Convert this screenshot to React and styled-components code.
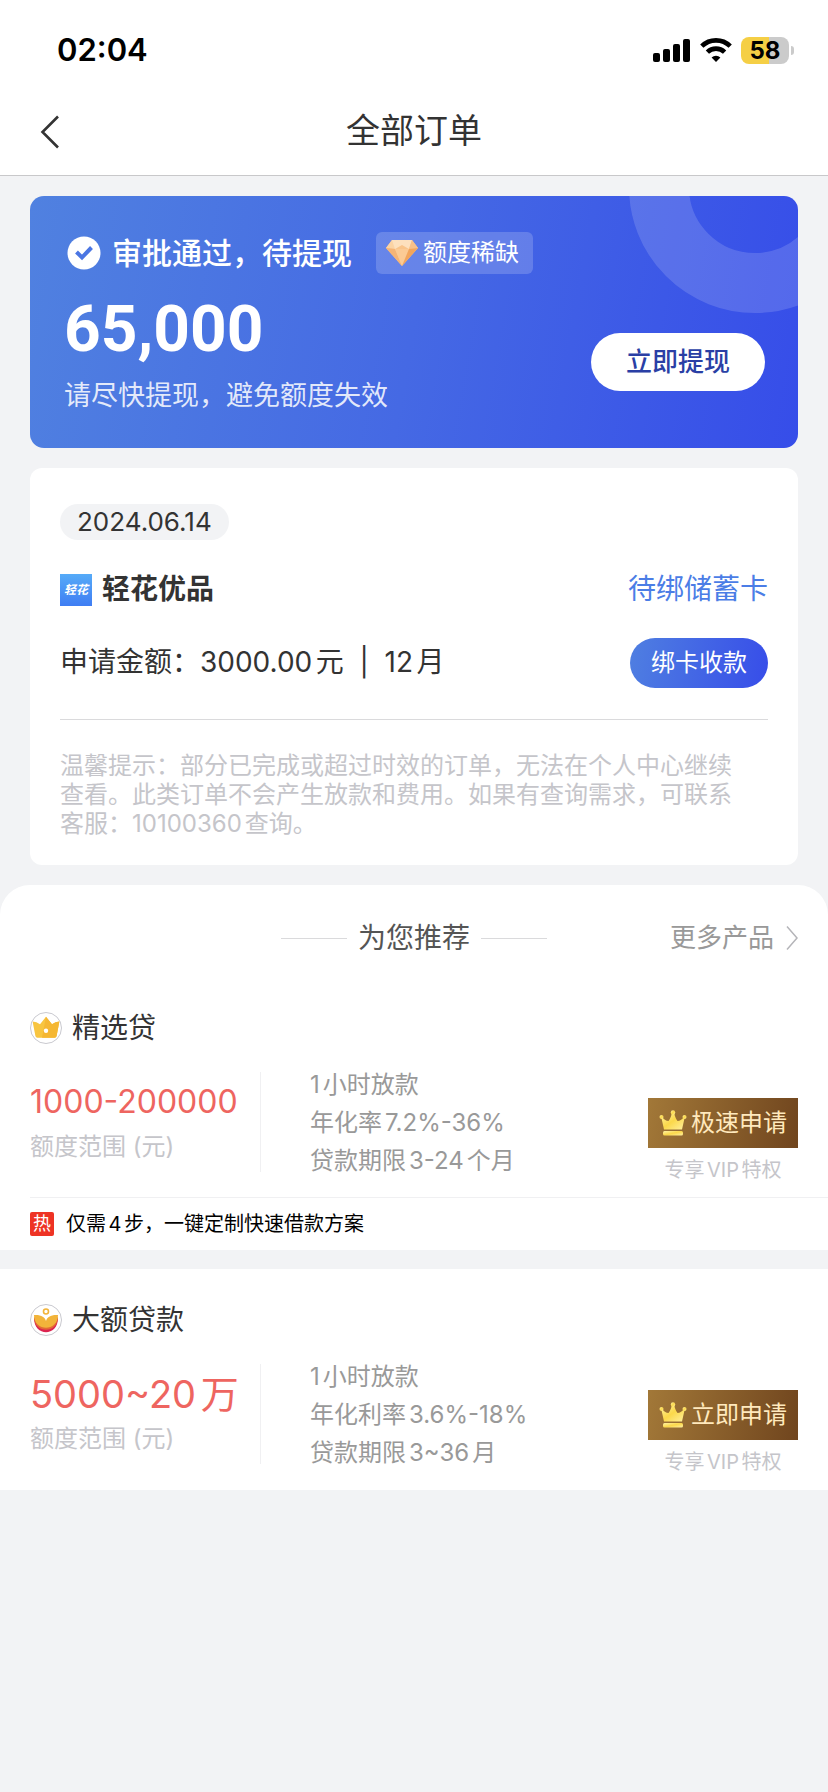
import styled, { createGlobalStyle } from "styled-components";

const Colors = {
  page: "#f2f3f5",
  dark: "#333333",
  grey: "#999999",
  light: "#c5c5ca",
  line: "#f0f0f2",
  red: "#ee6560",
  blue: "#4b7de6",
};

const products = [
  {
    id: 1,
    icon: "crown",
    name: "精选贷",
    amount: "1000-200000",
    details: ["1小时放款", "年化率7.2%-36%", "贷款期限3-24个月"],
    action: "极速申请",
    hot: "仅需4步，一键定制快速借款方案",
  },
  {
    id: 2,
    icon: "lotus",
    name: "大额贷款",
    amount: "5000~20万",
    large: true,
    details: ["1小时放款", "年化利率3.6%-18%", "贷款期限3~36月"],
    action: "立即申请",
  },
];

function SignalIcon() {
  return (
    <svg width="38" height="24" viewBox="0 0 38 24" aria-hidden="true">
      <rect x="0" y="15" width="7" height="9" rx="2" />
      <rect x="10" y="11" width="7" height="13" rx="2" />
      <rect x="20" y="6" width="7" height="18" rx="2" />
      <rect x="30" y="1" width="7" height="23" rx="2" />
    </svg>
  );
}

function WifiIcon() {
  return (
    <svg width="32" height="24" viewBox="0 0 32 24" aria-hidden="true">
      <g fill="none" stroke="#000" strokeWidth="4.6">
        <path d="M1.8 8.2a20.2 20.2 0 0 1 28.4 0" />
        <path d="M7.4 14.2a12.2 12.2 0 0 1 17.2 0" />
      </g>
      <path d="M16 24l-4.4-4.4a6.4 6.4 0 0 1 8.8 0z" />
    </svg>
  );
}

function CheckIcon() {
  return (
    <svg width="40" height="40" viewBox="0 0 40 40" aria-hidden="true">
      <circle cx="20" cy="20" r="16.5" fill="#fff" />
      <path d="M12.5 19l5.5 5.5 9.5-10" fill="none" stroke="#4b76e3" strokeWidth="4" />
    </svg>
  );
}

function DiamondIcon() {
  return (
    <svg width="34" height="28" viewBox="0 0 34 28" aria-hidden="true">
      <path d="M7 1h20l6 8-16 18L1 9z" fill="#f9c48a" />
      <path d="M7 1h10l-7 9-9-1z" fill="#fbd3a4" />
      <path d="M7 1h20l-3 9-7-4-7 4z" fill="#fde0bd" />
      <path d="M27 1l6 8-9 1z" fill="#f8c088" />
      <path d="M1 9l9 1 7 17z" fill="#f5b476" />
      <path d="M10 10h14l-7 17z" fill="#fbca94" />
      <path d="M24 10l9-1-16 18z" fill="#f2a55c" />
    </svg>
  );
}

function CrownBadge() {
  return (
    <svg width="32" height="32" viewBox="0 0 32 32" aria-hidden="true">
      <circle cx="16" cy="16" r="15.5" fill="#fff" stroke="#c9c9cf" />
      <path
        d="M2.6 9.6q4 .2 7.4 2.6L16 4.800l6 7.400q3.400-2.400 7.400-2.600L26.600 24q-.3 1.800-2 1.800H7.400q-1.700 0-2-1.800z"
        fill="#f8c540"
      />
      <path d="M16 4.800l6 7.400q3.400-2.400 7.400-2.600L26.600 24q-.3 1.800-2 1.800H12z" fill="#f5b733" />
      <circle cx="16" cy="18.800" r="2.200" fill="#fff" />
    </svg>
  );
}

function LotusBadge() {
  return (
    <svg width="32" height="32" viewBox="0 0 32 32" aria-hidden="true">
      <circle cx="16" cy="16" r="15.5" fill="#fff" stroke="#c9c9cf" />
      <path d="M4 14C4 33 28 33 28 14l-12 8z" fill="#dc2450" />
      <path d="M4 13C4 30 28 30 28 13l-12 7z" fill="#e36a35" />
      <path d="M4 11C11 10.500 15 13 16 17c1-4 5-6.500 12-6C28 28 4 28 4 11z" fill="#f2b43a" />
      <circle cx="16" cy="7.500" r="2.500" fill="none" stroke="#f2b43a" strokeWidth="1.600" />
    </svg>
  );
}

function VipCrown() {
  return (
    <svg width="28" height="28" viewBox="0 0 28 28" aria-hidden="true">
      <defs>
        <linearGradient id="vip-crown" x1="0" y1="0" x2="1" y2="1">
          <stop offset="0" stopColor="#fff3a6" />
          <stop offset="0.5" stopColor="#fbd84a" />
          <stop offset="1" stopColor="#fff0a0" />
        </linearGradient>
      </defs>
      <g fill="url(#vip-crown)">
        <path d="M2 7q4 5 7.500 5Q12 9 13 3h2q1 6 3.500 9 3.500 0 7.500-5l-3 13.500H5z" />
        <rect x="4" y="22" width="20" height="4.500" rx="1.500" />
        <circle cx="14" cy="3.500" r="2.200" />
        <circle cx="2.500" cy="8" r="2" />
        <circle cx="25.500" cy="8" r="2" />
      </g>
    </svg>
  );
}

function Product({ item }) {
  return (
    <ProductBox>
      <ProductName>
        {item.icon === "crown" ? <CrownBadge /> : <LotusBadge />}
        {item.name}
      </ProductName>
      <ProductBody>
        <AmountColumn>
          <Amount $large={item.large}>{item.amount}</Amount>
          <AmountLabel>额度范围 (元)</AmountLabel>
        </AmountColumn>
        <Details>
          {item.details.map((line) => (
            <li key={line}>{line}</li>
          ))}
        </Details>
        <ActionColumn>
          <VipButton type="button">
            <VipCrown />
            {item.action}
          </VipButton>
          <VipNote>专享VIP特权</VipNote>
        </ActionColumn>
      </ProductBody>
      {item.hot && (
        <HotRow>
          <HotBadge>热</HotBadge>
          {item.hot}
        </HotRow>
      )}
    </ProductBox>
  );
}

export default function App() {
  return (
    <Page>
      <GlobalStyle />
      <Header>
        <StatusBar>
          <span>02:04</span>
          <StatusIcons>
            <SignalIcon />
            <WifiIcon />
            <Battery>58</Battery>
          </StatusIcons>
        </StatusBar>
        <Nav>
          <BackButton type="button" aria-label="返回">
            <svg width="20" height="34" viewBox="0 0 20 34" fill="none" stroke="#333" strokeWidth="2.600">
              <path d="M18 1.500L2.500 17 18 32.500" />
            </svg>
          </BackButton>
          <h1>全部订单</h1>
        </Nav>
      </Header>

      <Main>
        <Hero>
          <HeroTop>
            <CheckIcon />
            <HeroTitle>审批通过，待提现</HeroTitle>
            <Tag>
              <DiamondIcon />
              额度稀缺
            </Tag>
          </HeroTop>
          <HeroBottom>
            <div>
              <HeroAmount>65,000</HeroAmount>
              <HeroHint>请尽快提现，避免额度失效</HeroHint>
            </div>
            <WithdrawButton type="button">立即提现</WithdrawButton>
          </HeroBottom>
        </Hero>

        <OrderCard>
          <DatePill>2024.06.14</DatePill>
          <CompanyRow>
            <Logo>轻花</Logo>
            <h2>轻花优品</h2>
            <OrderStatus>待绑储蓄卡</OrderStatus>
          </CompanyRow>
          <ApplyRow>
            <p>申请金额：3000.00元&nbsp; |&nbsp; 12月</p>
            <BindButton type="button">绑卡收款</BindButton>
          </ApplyRow>
          <Tip>
            温馨提示：部分已完成或超过时效的订单，无法在个人中心继续查看。此类订单不会产生放款和费用。如果有查询需求，可联系客服：10100360查询。
          </Tip>
        </OrderCard>
      </Main>

      <Recommend>
        <RecommendHead>
          <RecommendTitle>为您推荐</RecommendTitle>
          <MoreLink href="#more">
            更多产品
            <svg width="12" height="26" viewBox="0 0 12 26" fill="none" stroke="#b5b5b9" strokeWidth="1.500">
              <path d="M1 1.500L11 13 1 24.500" />
            </svg>
          </MoreLink>
        </RecommendHead>
        <ProductList>
          {products.map((item) => (
            <Product key={item.id} item={item} />
          ))}
        </ProductList>
      </Recommend>
    </Page>
  );
}

const GlobalStyle = createGlobalStyle`
  *,
  *::before,
  *::after {
    box-sizing: border-box;
  }
  body {
    margin: 0;
    background: ${Colors.page};
    color: ${Colors.dark};
    font-family: Inter, "Noto Sans CJK SC", sans-serif;
    line-height: 1.2;
    text-autospace: normal;
  }
  h1, h2, p, ul {
    margin: 0;
    padding: 0;
    font-weight: 400;
  }
  button {
    border: 0;
    padding: 0;
    font-family: inherit;
    line-height: inherit;
    cursor: pointer;
  }
  svg {
    display: block;
    flex: none;
  }
`;

const Page = styled.div`
  min-height: 100vh;
  background: ${Colors.page};
`;

const Header = styled.header`
  background: #fff;
  border-bottom: 1px solid #c8c8ca;
`;

const StatusBar = styled.div`
  display: flex;
  align-items: center;
  justify-content: space-between;
  height: 88px;
  padding: 12px 34px 0 57px;
  color: #000;
  font-size: 31px;
  font-weight: 600;
`;

const StatusIcons = styled.div`
  display: flex;
  align-items: center;
  gap: 9px;
`;

const Battery = styled.span`
  position: relative;
  width: 48px;
  height: 27px;
  margin-right: 5px;
  border-radius: 8px;
  background: linear-gradient(90deg, #f5cf45 58%, #cbcbcb 58%);
  font-size: 24px;
  font-weight: 700;
  line-height: 27px;
  text-align: center;

  &::after {
    content: "";
    position: absolute;
    top: 9px;
    right: -5px;
    width: 3px;
    height: 9px;
    border-radius: 0 4px 4px 0;
    background: #cbcbcb;
  }
`;

const Nav = styled.nav`
  display: grid;
  grid-template-columns: 1fr auto 1fr;
  align-items: center;
  height: 87px;
  padding: 0 40px;

  h1 {
    font-size: 34px;
  }
`;

const BackButton = styled.button`
  justify-self: start;
  background: none;
`;

const Main = styled.main`
  display: flex;
  flex-direction: column;
  gap: 20px;
  padding: 20px 30px;
`;

const Hero = styled.section`
  position: relative;
  overflow: hidden;
  padding: 36px 33px 34px 34px;
  border-radius: 14px;
  background: linear-gradient(100deg, #5081e0 0%, #4569e4 50%, #364de9 100%);
  color: #fff;

  &::before {
    content: "";
    position: absolute;
    top: -135px;
    right: -83px;
    width: 252px;
    height: 252px;
    border: 60px solid rgba(255, 255, 255, 0.15);
    border-radius: 50%;
  }
`;

const HeroTop = styled.div`
  display: flex;
  align-items: center;
  height: 42px;
`;

const HeroTitle = styled.h2`
  margin: 0 24px 0 8px;
  font-size: 30px;
  font-weight: 500;
`;

const Tag = styled.span`
  display: flex;
  align-items: center;
  gap: 4px;
  height: 42px;
  padding: 0 14px 0 9px;
  border-radius: 6px;
  background: rgba(255, 255, 255, 0.18);
  font-size: 24px;
`;

const HeroBottom = styled.div`
  display: flex;
  align-items: center;
  justify-content: space-between;
  margin-top: 28px;
`;

const HeroAmount = styled.p`
  margin-bottom: 20px;
  font-family: Roboto, sans-serif;
  font-size: 64px;
  font-weight: 700;
  line-height: 56px;
`;

const HeroHint = styled.p`
  color: rgba(255, 255, 255, 0.85);
  font-size: 27px;
  line-height: 36px;
`;

const WithdrawButton = styled.button`
  position: relative;
  height: 58px;
  margin-top: 8px;
  padding: 0 35px;
  border-radius: 29px;
  background: #fff;
  color: #2a3fa5;
  font-size: 26px;
  font-weight: 500;
`;

const OrderCard = styled.section`
  padding: 36px 30px 27px;
  border-radius: 12px;
  background: #fff;
`;

const DatePill = styled.time`
  display: inline-block;
  padding: 0 17px;
  border-radius: 18px;
  background: ${Colors.page};
  font-size: 26px;
  line-height: 36px;
  vertical-align: top;
`;

const CompanyRow = styled.div`
  display: flex;
  align-items: center;
  gap: 10px;
  height: 32px;
  margin-top: 34px;

  h2 {
    font-size: 28px;
    font-weight: 700;
  }
`;

const Logo = styled.span`
  width: 32px;
  height: 32px;
  background: linear-gradient(#56abf8, #3f7df3);
  color: #fff;
  font-size: 12px;
  font-style: italic;
  font-weight: 700;
  line-height: 32px;
  text-align: center;
`;

const OrderStatus = styled.span`
  margin-left: auto;
  color: ${Colors.blue};
  font-size: 28px;
`;

const ApplyRow = styled.div`
  display: flex;
  align-items: center;
  justify-content: space-between;
  margin-top: 32px;
  padding-bottom: 31px;
  border-bottom: 1px solid #dadadc;

  p {
    font-size: 28px;
  }
`;

const BindButton = styled.button`
  height: 50px;
  padding: 0 21px;
  border-radius: 25px;
  background: linear-gradient(100deg, #4f7fe1, #374de9);
  color: #fff;
  font-size: 24px;
`;

const Tip = styled.p`
  margin-top: 31px;
  padding-right: 20px;
  color: ${Colors.light};
  font-size: 24px;
  line-height: 29px;
`;

const Recommend = styled.section`
  line-height: 38px;
`;

const RecommendHead = styled.div`
  display: grid;
  grid-template-columns: 1fr auto 1fr;
  align-items: center;
  padding: 34px 30px 20px;
  border-radius: 30px 30px 0 0;
  background: #fff;
`;

const RecommendTitle = styled.h2`
  grid-column: 2;
  display: flex;
  align-items: center;
  gap: 11px;
  color: #555;
  font-size: 28px;

  &::before,
  &::after {
    content: "";
    width: 66px;
    height: 1px;
    background: #dadadc;
  }
`;

const MoreLink = styled.a`
  justify-self: end;
  display: flex;
  align-items: center;
  gap: 12px;
  color: ${Colors.grey};
  font-size: 26px;
  text-decoration: none;
`;

const ProductList = styled.div`
  display: flex;
  flex-direction: column;
  gap: 19px;
`;

const ProductBox = styled.article`
  padding-top: 35px;
  background: #fff;
`;

const ProductName = styled.h2`
  display: flex;
  align-items: center;
  gap: 10px;
  height: 32px;
  padding: 0 30px;
  font-size: 28px;
`;

const ProductBody = styled.div`
  display: flex;
  margin: 22px 0 0 30px;
  padding: 0 30px 17px 0;
  border-bottom: 1px solid ${Colors.line};

  article:last-child > & {
    border-color: transparent;
  }
`;

const AmountColumn = styled.div`
  width: 231px;
  margin: 6px 0 8px;
  padding-top: 6px;
  border-right: 1px solid ${Colors.line};
`;

const Amount = styled.p`
  color: ${Colors.red};
  font-size: ${(props) => (props.$large ? 38 : 32)}px;
  line-height: 48px;
  white-space: nowrap;
`;

const AmountLabel = styled.p`
  color: ${Colors.light};
  font-size: 24px;
  line-height: 42px;
`;

const Details = styled.ul`
  flex: 1;
  padding-left: 49px;
  color: ${Colors.grey};
  font-size: 24px;
  line-height: 38px;
  list-style: none;
`;

const ActionColumn = styled.div`
  display: flex;
  flex-direction: column;
  align-items: center;
  justify-content: flex-end;
  gap: 12px;
`;

const VipButton = styled.button`
  display: flex;
  align-items: center;
  justify-content: center;
  gap: 4px;
  width: 150px;
  height: 50px;
  background: linear-gradient(100deg, #a27838, #70451e);
  color: #ffe9bd;
  font-size: 24px;
`;

const VipNote = styled.span`
  color: ${Colors.light};
  font-size: 20px;
  line-height: 20px;
`;

const HotRow = styled.p`
  display: flex;
  align-items: center;
  gap: 12px;
  height: 52px;
  padding: 0 30px;
  color: #000;
  font-size: 20px;
`;

const HotBadge = styled.span`
  width: 24px;
  height: 24px;
  border-radius: 2px;
  background: #ee3324;
  color: #fff;
  font-size: 18px;
  line-height: 24px;
  text-align: center;
`;
